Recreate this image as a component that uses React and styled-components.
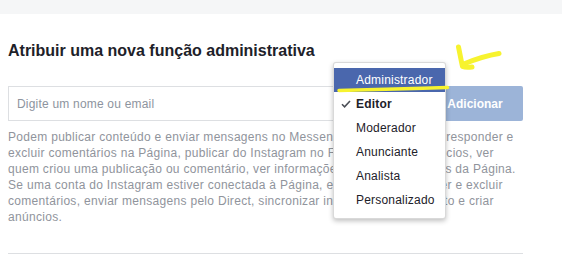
import React from "react";
import styled, { createGlobalStyle } from "styled-components";

const GlobalStyle = createGlobalStyle`
  html, body { margin: 0; padding: 0; background: #ffffff; }
  body { font-family: "Liberation Sans", Arial, Helvetica, sans-serif; color: #1d2129; }
`;

const Page = styled.div`
  position: relative;
  width: 562px;
  height: 259px;
  overflow: hidden;
  background: #ffffff;
`;

const TopBand = styled.div`
  height: 14px;
  background: #f5f6f7;
`;

const Section = styled.section`
  width: 515px;
  padding: 27px 0 0 8px;
`;

const Title = styled.h2`
  margin: 0;
  font-size: 16px;
  line-height: 20px;
  font-weight: bold;
  color: #1d2129;
`;

const Row = styled.div`
  position: relative;
  display: flex;
  gap: 6px;
  margin-top: 25px;
  height: 35px;
`;

const Input = styled.input`
  flex: 1;
  box-sizing: border-box;
  height: 35px;
  border: 1px solid #dddfe2;
  border-radius: 0;
  padding: 0 8px;
  font-family: inherit;
  font-size: 12px;
  color: #1d2129;
  outline: none;
  &::placeholder { color: #8d949e; letter-spacing: 0.2px; }
`;

const Button = styled.button`
  width: 96px;
  height: 35px;
  border: none;
  border-radius: 2px;
  background: #9cb4d8;
  color: #ffffff;
  font-family: inherit;
  font-weight: bold;
  font-size: 12px;
  padding: 0;
`;

const Description = styled.p`
  margin: 8px 0 0;
  font-size: 12px;
  line-height: 16px;
  color: #90949c;
  letter-spacing: 0.3px;
  white-space: nowrap;
`;

const Divider = styled.hr`
  margin: 28px 0 0;
  border: none;
  border-top: 1px solid #dddfe2;
`;

const Menu = styled.ul`
  position: absolute;
  left: 325px;
  top: -24px;
  width: 113px;
  box-sizing: border-box;
  margin: 0;
  padding: 5px 0 6px;
  list-style: none;
  background: #ffffff;
  border: 1px solid rgba(0, 0, 0, 0.15);
  border-radius: 3px;
  box-shadow: 0 2px 5px rgba(0, 0, 0, 0.25);
  z-index: 2;
`;

const Item = styled.li`
  position: relative;
  height: 24px;
  line-height: 24px;
  padding-left: 22px;
  font-size: 12px;
  letter-spacing: 0.2px;
  white-space: nowrap;
  color: ${(p) => (p.$active ? "#ffffff" : "#1d2129")};
  background: ${(p) => (p.$active ? "#4a67ad" : "transparent")};
  font-weight: ${(p) => (p.$selected ? "bold" : "normal")};
`;

const Check = styled.svg`
  position: absolute;
  left: 7px;
  top: 8px;
`;

const Annotation = styled.svg`
  position: absolute;
  left: 0;
  top: 0;
  pointer-events: none;
  z-index: 3;
`;

const roles = [
  { label: "Administrador", active: true },
  { label: "Editor", selected: true },
  { label: "Moderador" },
  { label: "Anunciante" },
  { label: "Analista" },
  { label: "Personalizado" },
];

export default function App() {
  return (
    <>
      <GlobalStyle />
      <Page>
        <TopBand />
        <Section>
          <Title>Atribuir uma nova função administrativa</Title>
          <Row>
            <Input placeholder="Digite um nome ou email" />
            <Button>Adicionar</Button>
            <Menu>
              {roles.map((r) => (
                <Item key={r.label} $active={r.active} $selected={r.selected}>
                  {r.selected && (
                    <Check width="10" height="8" viewBox="0 0 10 8">
                      <path d="M1 4.2 L3.6 6.8 L9 1" fill="none" stroke="#4b4f56" strokeWidth="1.6" />
                    </Check>
                  )}
                  {r.label}
                </Item>
              ))}
            </Menu>
          </Row>
          <Description>
            Podem publicar conteúdo e enviar mensagens no Messenger como a Página, responder e
            <br />
            excluir comentários na Página, publicar do Instagram no Facebook, criar anúncios, ver
            <br />
            quem criou uma publicação ou comentário, ver informações e todos os insights da Página.
            <br />
            Se uma conta do Instagram estiver conectada à Página, eles podem responder e excluir
            <br />
            comentários, enviar mensagens pelo Direct, sincronizar informações do contato e criar
            <br />
            anúncios.
          </Description>
          <Divider />
        </Section>
        <Annotation width="562" height="259" viewBox="0 0 562 259">
          <path
            d="M458.5 47 C460 54 461 60 462.5 66.5 C465 67.5 468 67.5 472 67"
            fill="none"
            stroke="#f7f32f"
            strokeWidth="5"
            strokeLinecap="round"
            strokeLinejoin="round"
          />
          <path
            d="M465 63.5 C476 59 487 55.5 499 53.5"
            fill="none"
            stroke="#f7f32f"
            strokeWidth="5"
            strokeLinecap="round"
          />
          <path
            d="M339 90.5 C370 89.5 410 88.5 447.5 87.5"
            fill="none"
            stroke="#f7f32f"
            strokeWidth="3.5"
            strokeLinecap="round"
          />
        </Annotation>
      </Page>
    </>
  );
}
